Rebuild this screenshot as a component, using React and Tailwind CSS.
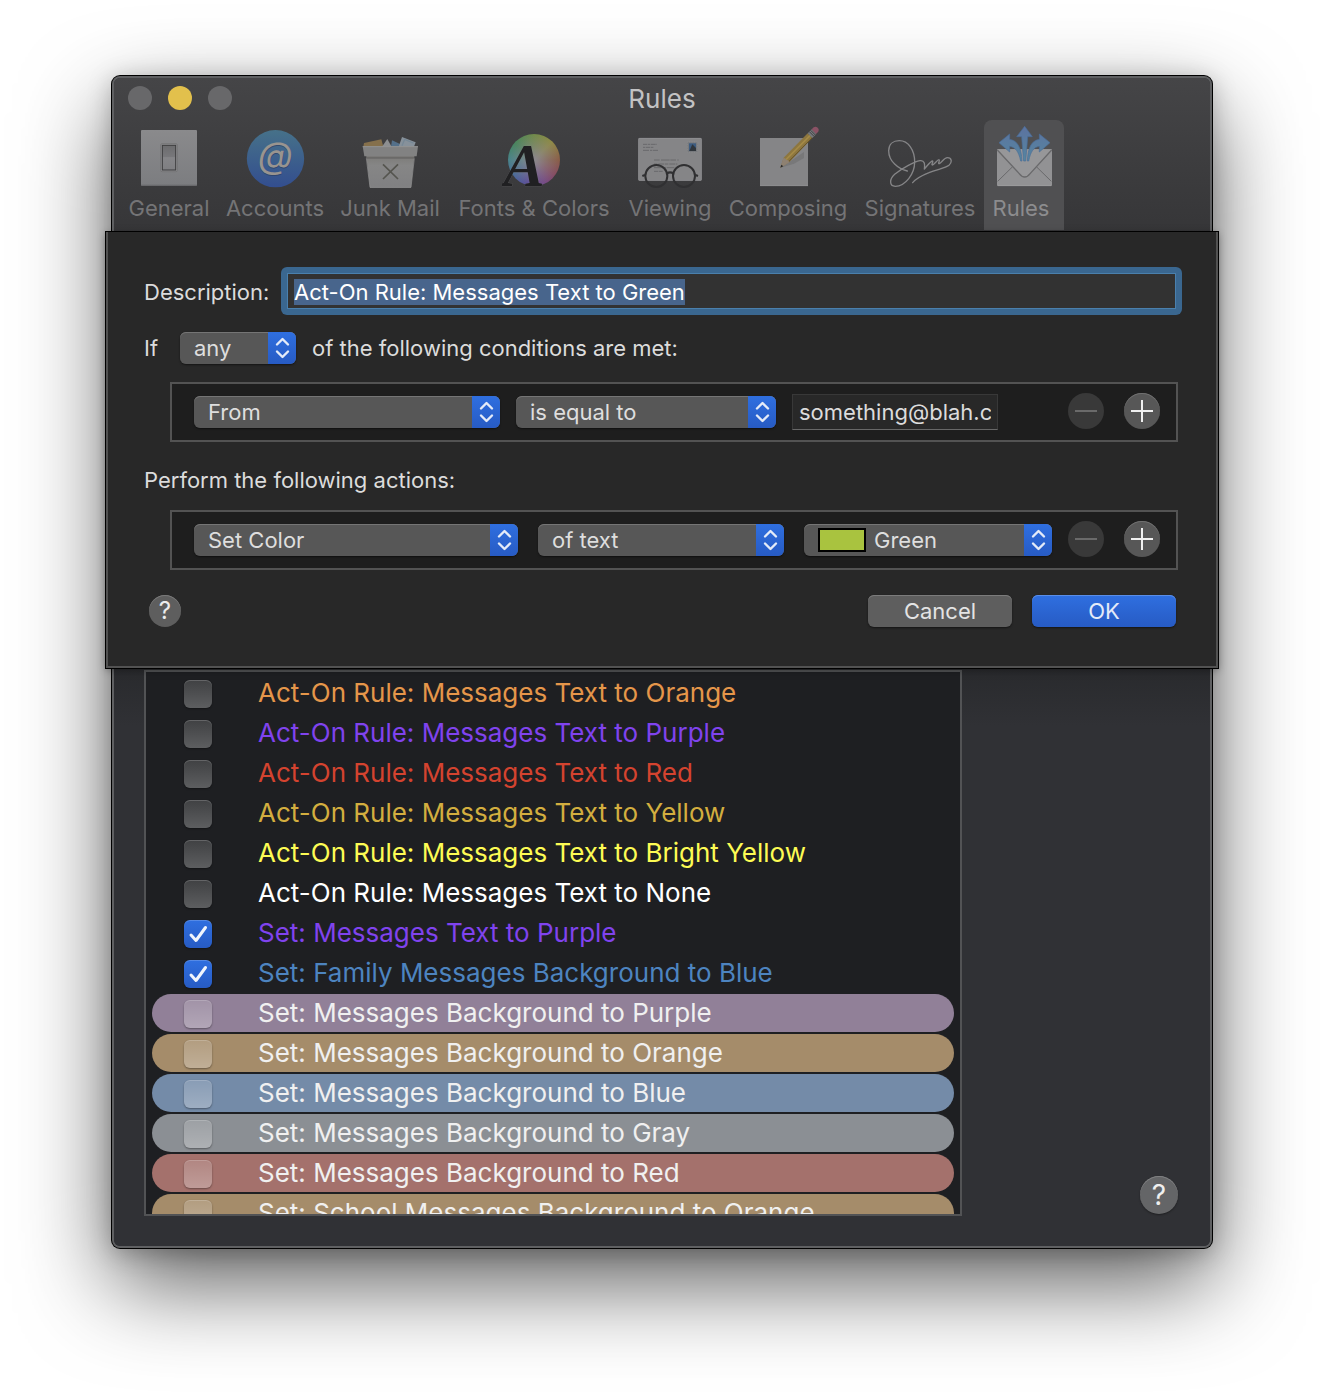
import { useEffect, useRef } from "react";

function GeneralIcon() {
  return (
    <svg viewBox="111 186 192 192" className="size-16" aria-hidden="true">
      <defs>
        <linearGradient id="plate" x1="0" y1="0" x2="0" y2="1">
          <stop offset="0" stopColor="#8a8a8c" />
          <stop offset="1" stopColor="#7c7d80" />
        </linearGradient>
        <linearGradient id="toggle" x1="0" y1="0" x2="0" y2="1">
          <stop offset="0" stopColor="#6c6c6e" />
          <stop offset=".45" stopColor="#77777a" />
          <stop offset=".5" stopColor="#858588" />
          <stop offset="1" stopColor="#7f7f82" />
        </linearGradient>
      </defs>
      <rect x="123" y="198" width="168" height="167" rx="3" fill="url(#plate)" />
      <rect x="123" y="362" width="168" height="3" fill="#69696c" />
      <rect x="182" y="239" width="50" height="84" rx="4" fill="#8f8f91" stroke="#6e6e70" strokeWidth="2" />
      <rect x="187" y="244" width="40" height="74" fill="url(#toggle)" stroke="#3c3c3e" strokeWidth="3" />
    </svg>
  );
}

function AccountsIcon() {
  return (
    <svg viewBox="429 186 192 192" className="size-16" aria-hidden="true">
      <defs>
        <linearGradient id="disc" x1="0" y1="0" x2="0" y2="1">
          <stop offset="0" stopColor="#467189" />
          <stop offset="1" stopColor="#334e8f" />
        </linearGradient>
      </defs>
      <circle cx="526.5" cy="284" r="86" fill="url(#disc)" />
      <text x="527" y="315" textAnchor="middle" fontSize="108" fontStyle="italic" fontFamily="Inter, sans-serif" fill="#2c4064" opacity=".7">@</text>
      <text x="526" y="312" textAnchor="middle" fontSize="108" fontStyle="italic" fontFamily="Inter, sans-serif" fill="#99948f">@</text>
    </svg>
  );
}

function JunkIcon() {
  return (
    <svg viewBox="774 186 192 192" className="size-16" aria-hidden="true">
      <defs>
        <linearGradient id="bin" x1="0" y1="0" x2="0" y2="1">
          <stop offset="0" stopColor="#7c7b78" />
          <stop offset=".3" stopColor="#868686" />
          <stop offset="1" stopColor="#808082" />
        </linearGradient>
      </defs>
      <path d="M790 248L792 237L844 226L850 248Z" fill="#85704c" />
      <path d="M846 248L862 225L875 248Z" fill="#8d8f91" />
      <path d="M873 248L876 229L900 240V248Z" fill="#54708a" />
      <path d="M896 248L906 219L947 235L942 248Z" fill="#87919a" />
      <path d="M906 245L914 226L940 237" fill="none" stroke="#768896" strokeWidth="4" />
      <path d="M799 276L810 371H933L943 276Z" fill="url(#bin)" />
      <path d="M799 278H943L942 284H800Z" fill="#6b6a68" />
      <path d="M788 247H954L950 277H793Z" fill="#828282" />
      <path d="M788 248H954" stroke="#a0a0a0" strokeWidth="2" />
      <path d="M799 283L810 370H933L943 283" fill="none" stroke="#929292" strokeWidth="2" />
      <path d="M849 301L894 345M894 301L849 345" stroke="#55554f" strokeWidth="5" />
    </svg>
  );
}

function FontsIcon() {
  return (
    <div className="grid size-16" aria-hidden="true">
      <div className="col-start-1 row-start-1 mt-2 ml-1.5 size-[52px] rounded-full bg-[radial-gradient(circle,#8a868a_5%,#8a868a88_35%,transparent_75%),conic-gradient(#6f8a45,#8f8a42_45deg,#8a5a42_90deg,#85485f_125deg,#744685_155deg,#57489a_195deg,#456a9a_235deg,#43838a_270deg,#43855c_310deg,#6f8a45)]" />
      <svg viewBox="186 186 192 192" className="col-start-1 row-start-1 size-16">
        <text x="190" y="366" fontSize="186" fontStyle="italic" fontWeight="700" fontFamily="'Liberation Serif', serif" fill="#202022" stroke="#8a8a8e" strokeOpacity=".35" strokeWidth="2" paintOrder="stroke">A</text>
      </svg>
    </div>
  );
}

function ViewingIcon() {
  return (
    <svg viewBox="594 186 192 192" className="size-16" aria-hidden="true">
      <rect x="595" y="222" width="190" height="128" rx="3" fill="#858587" />
      <rect x="596" y="223" width="188" height="126" rx="3" fill="none" stroke="#939395" strokeWidth="2" />
      <g stroke="#69696b" strokeWidth="3">
        <path d="M609 241H651" strokeDasharray="12 2 8 2 14 2" />
        <path d="M609 250H642" strokeDasharray="6 2 14 2" />
        <path d="M609 259H654" strokeDasharray="18 3 7 2" />
        <path d="M642 288H716" strokeDasharray="17 4 26 2" />
        <path d="M642 300H712" strokeDasharray="10 3 18 2" />
        <path d="M642 311H706" strokeDasharray="22 3 12 2" />
        <path d="M642 322H668" strokeDasharray="12 2" />
      </g>
      <rect x="742" y="234" width="31" height="31" fill="#77797d" stroke="#929294" strokeWidth="2" strokeDasharray="3 2" />
      <rect x="747" y="238" width="21" height="23" fill="#3d5c80" />
      <path d="M748 261L757 241L768 252V261Z" fill="#30363c" />
      <g fill="none" stroke="#303032" strokeWidth="6">
        <circle cx="649" cy="336" r="33" />
        <circle cx="732" cy="336" r="33" />
        <path d="M681 328Q690 322 700 328M615 333L607 336M766 333L774 336" strokeWidth="7" />
      </g>
    </svg>
  );
}

function ComposingIcon() {
  return (
    <svg viewBox="108 186 192 192" className="size-16" aria-hidden="true">
      <rect x="120" y="222" width="144" height="144" fill="#858587" />
      <path d="M120 365H264" stroke="#929294" strokeWidth="2" />
      <path d="M182 311L252 264V282L222 299Z" fill="#747475" opacity=".8" />
      <path d="M181 311L191 281L263 208L277 222L208 294Z" fill="#8d763f" />
      <path d="M198 287L270 215" stroke="#a58a46" strokeWidth="5" />
      <path d="M205 294L277 221" stroke="#665226" strokeWidth="3" />
      <path d="M181 311L190 282Q197 281 199 287Q207 288 208 295Z" fill="#8e8172" />
      <path d="M181 311L184 302L190 307Z" fill="#29292b" />
      <path d="M263 208L275 196L289 210L277 222Z" fill="#77797c" />
      <path d="M268 203L282 217M272 199L286 213" stroke="#3d3e41" strokeWidth="3" />
      <path d="M275 196L281 190Q287 186 293 191Q299 197 294 204L288 210Z" fill="#8a5265" />
    </svg>
  );
}

function SignaturesIcon() {
  return (
    <svg viewBox="504 186 192 192" className="size-16" aria-hidden="true">
      <path
        d="M562 321C535 315 506 292 506 260C506 240 520 230 538 230C565 230 584 258 584 294C584 330 556 367 526 367C507 367 508 345 524 331C548 311 584 293 600 290C614 288 615 300 613 315C622 305 632 291 638 291C641 293 632 303 638 303C645 299 652 287 657 287C661 290 652 299 658 299C666 295 672 281 682 281C696 281 697 295 687 304C675 313 650 316 627 326C607 334 588 344 578 356"
        fill="none"
        stroke="#858587"
        strokeWidth="4"
        strokeLinecap="round"
        strokeLinejoin="round"
      />
    </svg>
  );
}

function RulesIcon() {
  return (
    <svg viewBox="96 186 192 192" className="size-16" aria-hidden="true">
      <defs>
        <linearGradient id="arrows" gradientUnits="userSpaceOnUse" x1="0" y1="187" x2="0" y2="291">
          <stop offset="0" stopColor="#5c72a0" />
          <stop offset="1" stopColor="#5586a0" />
        </linearGradient>
      </defs>
      <rect x="111" y="255" width="165" height="111" rx="3" fill="#929294" />
      <path d="M113 352L158 308M274 352L229 308" stroke="#69696b" strokeWidth="3" />
      <path d="M112 258L177 328Q194 350 211 328L275 258" fill="#979799" stroke="#69696b" strokeWidth="4" />
      <path d="M113 365H274" stroke="#a0a0a2" strokeWidth="2" />
      <g fill="url(#arrows)" stroke="#486c98" strokeWidth="2">
        <path d="M194 187L217 218H203Q201 248 197 291H191Q187 248 185 218H170Z" />
        <path d="M117 236L149 210V226C174 230 184 253 186 291H182C176 262 166 250 149 247V264Z" />
        <path d="M270 236L238 210V226C213 230 204 253 202 291H206C212 262 221 250 238 247V264Z" />
      </g>
    </svg>
  );
}

const TABS = [
  { name: "General", Icon: GeneralIcon, width: "w-[98px]" },
  { name: "Accounts", Icon: AccountsIcon, width: "w-[114px]" },
  { name: "Junk Mail", Icon: JunkIcon, width: "w-[116px]" },
  { name: "Fonts & Colors", Icon: FontsIcon, width: "w-[172px]" },
  { name: "Viewing", Icon: ViewingIcon, width: "w-[100px]" },
  { name: "Composing", Icon: ComposingIcon, width: "w-[136px]" },
  { name: "Signatures", Icon: SignaturesIcon, width: "w-32" },
  { name: "Rules", Icon: RulesIcon, width: "w-20", active: true },
];

const RULES = [
  { name: "Act-On Rule: Messages Text to Orange", text: "text-[#e5964a]" },
  { name: "Act-On Rule: Messages Text to Purple", text: "text-[#8043ee]" },
  { name: "Act-On Rule: Messages Text to Red", text: "text-[#d4432f]" },
  { name: "Act-On Rule: Messages Text to Yellow", text: "text-[#d3ae3f]" },
  { name: "Act-On Rule: Messages Text to Bright Yellow", text: "text-[#fdfb54]" },
  { name: "Act-On Rule: Messages Text to None", text: "text-white" },
  { name: "Set: Messages Text to Purple", text: "text-[#8043ee]", on: true },
  { name: "Set: Family Messages Background to Blue", text: "text-[#4d84c0]", on: true },
  { name: "Set: Messages Background to Purple", row: "bg-[#918098]" },
  { name: "Set: Messages Background to Orange", row: "bg-[#a58c6a]" },
  { name: "Set: Messages Background to Blue", row: "bg-[#748ba8]" },
  { name: "Set: Messages Background to Gray", row: "bg-[#8b8f94]" },
  { name: "Set: Messages Background to Red", row: "bg-[#a4716c]" },
  { name: "Set: School Messages Background to Orange", row: "bg-[#a58c6a]" },
];

function Toolbar() {
  return (
    <header className="rounded-t-md bg-linear-to-b from-[#454547] to-[#363638] pb-0.5">
      <div className="grid h-[42px] grid-cols-[1fr_auto_1fr] items-center px-3.5">
        <div className="flex gap-4 pb-0.5">
          <button aria-label="Close" className="size-6 rounded-full bg-[#68686a]" />
          <button aria-label="Minimize" className="size-6 rounded-full bg-[#e2c04c]" />
          <button aria-label="Zoom" className="size-6 rounded-full bg-[#68686a]" />
        </div>
        <h1 className="text-[26px] leading-8 text-[#c2c2c3]">Rules</h1>
      </div>
      <nav className="flex px-1.5">
        {TABS.map(({ name, Icon, width, active }) => (
          <button
            key={name}
            className={`${width} flex h-[110px] flex-col items-center gap-1 rounded-t-lg pt-1.5 text-[22px] leading-7 whitespace-nowrap ${
              active ? "bg-[#505052] text-[#8c8c8e]" : "text-[#747476]"
            }`}
          >
            <Icon />
            <span className={active ? "pr-1.5" : ""}>{name}</span>
          </button>
        ))}
      </nav>
    </header>
  );
}

function Popup({ label, value, swatch }) {
  return (
    <div className="relative h-8 rounded-md shadow-[0_1px_2px_#00000080]">
      <select
        aria-label={label}
        defaultValue={value}
        className={`h-8 w-full appearance-none rounded-md bg-[#575757] pr-8 text-[22px] leading-8 text-[#dedede] shadow-[inset_0_1px_0_#757575] outline-none ${
          swatch ? "pl-[70px]" : "pl-3.5"
        }`}
      >
        <option>{value}</option>
      </select>
      {swatch && (
        <span className="pointer-events-none absolute top-1 left-3.5 h-6 w-12 border-2 border-black bg-[#a9c33f]" />
      )}
      <span className="pointer-events-none absolute inset-y-0 right-0 grid w-7 place-items-center rounded-r-md bg-linear-to-b from-[#2f6fe0] to-[#275bc4]">
        <svg viewBox="0 0 28 32" className="h-8 w-7" fill="none" stroke="#e4ebf8" strokeWidth="2.4" strokeLinecap="round" strokeLinejoin="round" aria-hidden="true">
          <path d="M9 12.5L14.500 7L20 12.500M9 19.500L14.500 25L20 19.500" />
        </svg>
      </span>
    </div>
  );
}

function AddRemove() {
  return (
    <div className="ml-4 flex gap-5 pb-0.5">
      <button type="button" aria-label="Remove" disabled className="size-9 rounded-full bg-[#393939]">
        <svg viewBox="0 0 36 36" className="size-9" stroke="#6a6a6a" strokeWidth="2" aria-hidden="true">
          <path d="M7 18H29" />
        </svg>
      </button>
      <button type="button" aria-label="Add" className="size-9 rounded-full bg-[#575757] shadow-[inset_0_1px_0_#707070]">
        <svg viewBox="0 0 36 36" className="size-9" stroke="#f0f0f0" strokeWidth="2" aria-hidden="true">
          <path d="M7 18H29M18 7V29" />
        </svg>
      </button>
    </div>
  );
}

function RuleSheet() {
  const description = useRef(null);
  useEffect(() => {
    description.current.focus();
    description.current.select();
  }, []);
  return (
    <form
      onSubmit={(e) => e.preventDefault()}
      className="relative -mx-2 border-x-2 border-b-2 border-[#525252] bg-[#282828] pt-[35px] pr-[38px] pb-[39px] pl-9 text-[22px] leading-8 text-[#dcdcdc] shadow-[0_0_0_1px_#000,0_2px_8px_#00000060]"
    >
      <div className="-mr-1 flex items-center">
        <label htmlFor="description" className="w-[137px] pt-0.5 whitespace-nowrap">
          Description:
        </label>
        <div className="flex flex-1 rounded-md bg-[#3a6790] p-1.5">
          <input
            id="description"
            ref={description}
            defaultValue="Act-On Rule: Messages Text to Green"
            className="h-9 min-w-0 flex-1 border border-[#4a80ad] bg-[#323232] px-1.5 pt-0.5 leading-7 text-white outline-none selection:bg-[#48658c] selection:text-white"
          />
        </div>
      </div>
      <div className="mt-[17px] flex items-center gap-4">
        <span className="w-5">If</span>
        <div className="w-[116px]">
          <Popup label="Match" value="any" />
        </div>
        <span>of the following conditions are met:</span>
      </div>
      <div className="mt-[18px] ml-[26px] flex h-[60px] items-center border-2 border-[#535353] bg-[#1e1e1e] pr-4 pl-[22px]">
        <div className="grid flex-1 grid-cols-[306fr_260fr_260fr] items-center gap-4">
          <Popup label="Field" value="From" />
          <Popup label="Comparison" value="is equal to" />
          <input
            aria-label="Value"
            defaultValue="something@blah.c"
            className="h-9 w-[206px] border border-[#383838] border-b-[#686868] bg-[#282828] px-1.5 outline-none"
          />
        </div>
        <AddRemove />
      </div>
      <p className="mt-[22px]">Perform the following actions:</p>
      <div className="mt-3.5 ml-[26px] flex h-[60px] items-center border-2 border-[#535353] bg-[#1e1e1e] pr-4 pl-[22px]">
        <div className="grid flex-1 grid-cols-[324fr_246fr_248fr] items-center gap-5">
          <Popup label="Action" value="Set Color" />
          <Popup label="Target" value="of text" />
          <Popup label="Color" value="Green" swatch />
        </div>
        <AddRemove />
      </div>
      <div className="mt-[25px] flex items-center gap-5 pr-0.5 pl-[5px]">
        <button type="button" aria-label="Help" className="mr-auto size-8 rounded-full bg-[#5e5e5e] text-2xl leading-8 text-[#ececec] shadow-[inset_0_1px_0_#7a7a7a]">
          ?
        </button>
        <button type="button" className="h-8 w-36 rounded-md bg-[#5e5e5e] text-[#e4e4e4] shadow-[inset_0_1px_0_#7c7c7c,0_1px_2px_#00000080]">
          Cancel
        </button>
        <button type="submit" className="h-8 w-36 rounded-md bg-linear-to-b from-[#2f6fe0] to-[#275bc4] text-[#e4ebf8] shadow-[inset_0_1px_0_#5a8ee8,0_1px_2px_#00000080]">
          OK
        </button>
      </div>
    </form>
  );
}

function RuleRow({ id, rule }) {
  const { name, text, row, on } = rule;
  return (
    <li className={`flex h-[38px] shrink-0 items-start rounded-full pt-1.5 pl-8 ${row || ""}`}>
      <span className="grid size-7">
        <input
          id={id}
          type="checkbox"
          defaultChecked={on}
          className={`peer col-start-1 row-start-1 size-7 appearance-none rounded-md shadow-[inset_0_1px_0_#ffffff30,0_1px_2px_#00000060] checked:from-[#2f6fe0] checked:to-[#275bc4] ${
            row ? "bg-linear-to-b from-white/15 to-white/30" : "bg-linear-to-b from-[#404143] to-[#5d5e60]"
          }`}
        />
        <svg viewBox="0 0 28 28" className="pointer-events-none invisible col-start-1 row-start-1 size-7 peer-checked:visible" fill="none" stroke="#f1f5fc" strokeWidth="3" strokeLinecap="round" strokeLinejoin="round" aria-hidden="true">
          <path d="M7 15L12 20.500L21.500 7.500" />
        </svg>
      </span>
      <label htmlFor={id} className={`-mt-0.5 pl-[46px] text-[26px] leading-[30px] whitespace-nowrap ${text || "text-[#f0f0f0]"}`}>
        {name}
      </label>
    </li>
  );
}

export default function App() {
  return (
    <div className="min-h-screen bg-white px-28 pt-[76px] pb-[148px] font-['Inter',sans-serif]">
      <main className="rounded-lg border-2 border-[#5f6062] bg-[#303135] shadow-[0_0_0_1px_#000,0_36px_90px_#000000a0,0_4px_24px_#00000040]">
        <Toolbar />
        <RuleSheet />
        <section className="flex items-end gap-[178px] rounded-b-md bg-linear-to-b from-[#292a2d] to-[#303135] to-10% pt-0.5 pr-8 pb-[30px] pl-[30px]">
          <ul className="flex h-[546px] flex-1 flex-col gap-0.5 overflow-hidden border-2 border-[#525355] bg-[#1e1f22] px-1.5 pt-0.5">
            {RULES.map((rule, i) => (
              <RuleRow key={rule.name} id={`rule-${i}`} rule={rule} />
            ))}
          </ul>
          <button aria-label="Help" className="mb-0.5 size-[38px] rounded-full bg-[#646567] text-[28px] leading-[38px] text-[#efefef] shadow-[inset_0_1px_0_#808183,0_1px_2px_#00000060]">
            ?
          </button>
        </section>
      </main>
    </div>
  );
}
